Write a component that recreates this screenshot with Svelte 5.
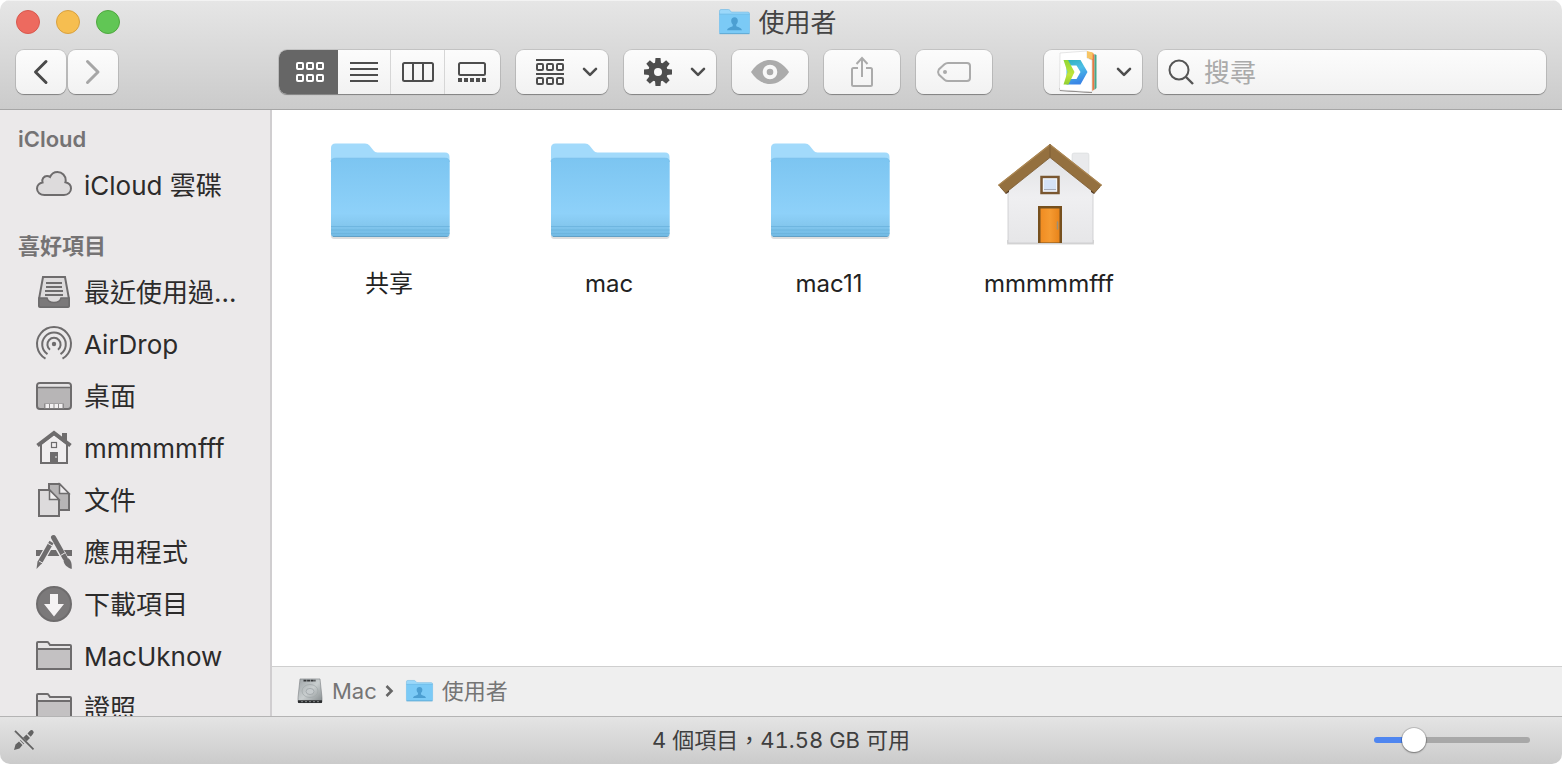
<script>
  let zoom = $state(21);
  let view = $state('icons');
  let query = $state('');

  const views = [
    { id: 'icons', label: '圖像' },
    { id: 'list', label: '列表' },
    { id: 'columns', label: '直欄' },
    { id: 'gallery', label: '圖庫' }
  ];

  const sections = [
    { title: 'iCloud', items: [{ icon: 'cloud', name: 'iCloud 雲碟' }] },
    {
      title: '喜好項目',
      items: [
        { icon: 'recents', name: '最近使用過…' },
        { icon: 'airdrop', name: 'AirDrop' },
        { icon: 'desktop', name: '桌面' },
        { icon: 'home', name: 'mmmmmfff' },
        { icon: 'documents', name: '文件' },
        { icon: 'apps', name: '應用程式' },
        { icon: 'downloads', name: '下載項目' },
        { icon: 'folder', name: 'MacUknow' },
        { icon: 'folder', name: '證照' }
      ]
    }
  ];

  const files = [
    { kind: 'folder', name: '共享' },
    { kind: 'folder', name: 'mac' },
    { kind: 'folder', name: 'mac11' },
    { kind: 'home', name: 'mmmmmfff' }
  ];
</script>

{#snippet squares(y)}
  {#each [1, 11, 21] as x}
    <rect {x} {y} width="6" height="6" rx="1" />
  {/each}
{/snippet}

{#snippet chevron()}
  <svg class="chev" width="16" height="10" viewBox="0 0 16 10"><path d="M2 1.8l6 6 6-6" fill="none" stroke="#4d4d4d" stroke-width="2.6" stroke-linecap="round" stroke-linejoin="round" /></svg>
{/snippet}

{#snippet usersFolder(w, h)}
  <svg width={w} height={h} viewBox="0 0 30 25" preserveAspectRatio="none">
    <path d="M0.5 2q0-1.5 1.500-1.500h7q1 0 1.600.8l1.400 1.700h16q1.500 0 1.500 1.500v18q0 1-1 1h-27q-1 0-1-1z" fill="#9bd8fa" stroke="#79bde5" stroke-width=".7" />
    <path d="M0.500 5.500h29v17q0 1.500-1 1.500h-27q-1 0-1-1.500z" fill="#7bcaf6" />
    <path d="M0.500 5h29" stroke="#62b5e5" stroke-width=".8" />
    <path d="M0.500 23.700h29" stroke="#60a9d4" stroke-width="1" />
    <path d="M15 8c-2 0-3.200 1.300-3.200 3.200 0 1.700.7 2.800 1.500 3.600v1.600c-.8 1.100-5 1.200-5.500 4.100h14.400c-.5-2.900-4.700-3-5.500-4.100v-1.600c.8-.8 1.500-1.900 1.500-3.600C18.200 9.300 17 8 15 8z" fill="#4c9fd2" />
  </svg>
{/snippet}

{#snippet sideIcon(kind)}
  <svg width="36" height="36" viewBox="0 0 36 36" fill="none" stroke="#6e6c6d" stroke-width="2">
    {#if kind === 'cloud'}
      <path d="M8.500 28C4.200 28 1 25.200 1 21.600c0-3.400 2.600-5.700 5.500-6.200C5.500 12 8 9 11 9c1.200 0 2.200.4 3 1C15.300 7 18 5 21.500 5c4.800 0 8.200 3.800 8.200 8.300 0 .7-.1 1.300-.3 1.900 3.400.7 5.600 3 5.600 6.300 0 3.700-3 6.500-7 6.500z" fill="#dddbdc" />
    {:else if kind === 'recents'}
      <path d="M7 3h22l4 22v6.500q0 1.500-1.500 1.500h-27Q3 33 3 31.500V25z" fill="#dddbdc" />
      <path d="M3 24h8q1 4.500 7 4.500t7-4.500h8v7.500q0 1.500-1.500 1.500h-27Q3 33 3 31.500z" fill="#7b797a" stroke-width="1.500" />
      <path d="M10 9h16M10 13h16M9 17h18M9 21h18" />
    {:else if kind === 'airdrop'}
      <circle cx="18" cy="18" r="2.200" fill="#6e6c6d" stroke="none" />
      <path d="M14 23.700A6.600 6.600 0 1 1 22 23.700M11.500 28.200A11.800 11.800 0 1 1 24.500 28.200M9.500 32.700A17 17 0 1 1 26.500 32.700" />
    {:else if kind === 'desktop'}
      <rect x="1" y="5" width="34" height="26" rx="3" fill="#b7b5b6" />
      <path d="M2 8q0-2 2-2h28q2 0 2 2v1H2z" fill="#e5e3e4" stroke="none" />
      <path d="M1 9.500h34" stroke-width="1.500" />
      <path d="M8 30.500v-5h20v5" fill="#8d8b8c" stroke="none" />
      <path d="M9.500 26h3.500v4H9.500zM14 26h3.500v4H14zM18.500 26H22v4h-3.500zM23 26h3.500v4H23z" fill="#f2f0f1" stroke="none" />
    {:else if kind === 'home'}
      <path d="M26 12V3h5v14" fill="#6e6c6d" stroke="none" />
      <path d="M5 14v19h26V14L18 4z" fill="#f0eeef" />
      <path d="M1.500 15.500L18 3l16.500 12.500" stroke-width="4" />
      <rect x="15.500" y="12.500" width="5" height="5" stroke-width="1.200" />
      <path d="M14 22h8v11h-8z" fill="#6e6c6d" stroke="none" /><path d="M20 26v2" stroke="#eee" stroke-width="1" />
    {:else if kind === 'documents'}
      <path d="M13 2h10.500L33 12v16H13z" fill="#b7b5b6" />
      <path d="M23.500 2v9.500H33z" fill="#eeecee" stroke-width="1.500" />
      <path d="M3 8h10.500L23 18v16H3z" fill="#dddbdc" />
      <path d="M13.500 8v9.500H23z" fill="#f2f0f1" stroke-width="1.500" />
    {:else if kind === 'apps'}
      <path d="M0 19h36" stroke-width="6" />
      <path d="M15.500 8L3 30M17 4l15 26" stroke="#ebe9ea" stroke-width="7" />
      <path d="M15.500 8L3.500 29" stroke-width="4.600" />
      <path d="M1.500 27.500l4 2.300L.5 35z" fill="#6e6c6d" stroke="none" />
      <path d="M17.500 3.500L29 24" stroke-width="5" stroke-linecap="round" />
      <path d="M27.500 26.500l4.500-2.500c3.500 2.400 3.900 6 3.700 11-4.200-1.500-7.800-4-8.200-8.500z" fill="#6e6c6d" stroke="none" />
      <path d="M12 9.500l4.500 2.500M3 27l4 2.300M24.500 21.500l5-3" stroke="#ebe9ea" stroke-width="1" />
    {:else if kind === 'downloads'}
      <circle cx="18" cy="18" r="17" fill="#7b797a" />
      <path d="M14 8h8v10h6L18 30.500 8 18h6z" fill="#f5f3f4" stroke="none" />
    {:else}
      <path d="M1 30V5q0-1 1-1h9q1 0 1.500.8l1.500 2.200H34q1 0 1 1v23H1z" fill="#e5e3e4" />
      <path d="M1 31V12q0-1 1-1h32q1 0 1 1v19z" fill="#c3c1c2" />
    {/if}
  </svg>
{/snippet}

<div class="window">
  <header>
    <div class="titlebar">
      <div class="lights">
        <button class="light red" aria-label="關閉"></button>
        <button class="light yellow" aria-label="縮到最小"></button>
        <button class="light green" aria-label="全螢幕"></button>
      </div>
      <h1>{@render usersFolder(31, 26)}<span>使用者</span></h1>
    </div>

    <div class="toolbar">
      <div class="nav">
        <button class="btn" aria-label="上一頁"><svg width="16" height="26" viewBox="0 0 16 26"><path d="M13 2.500L2.500 13 13 23.500" fill="none" stroke="#4a4a4a" stroke-width="3" stroke-linecap="round" stroke-linejoin="round" /></svg></button>
        <button class="btn" aria-label="下一頁"><svg width="16" height="26" viewBox="0 0 16 26"><path d="M2.500 2.500L13 13 2.500 23.500" fill="none" stroke="#a6a6a6" stroke-width="3" stroke-linecap="round" stroke-linejoin="round" /></svg></button>
      </div>

      <div class="views">
        {#each views as v}
          <button class:active={view === v.id} aria-label={v.label} aria-pressed={view === v.id} onclick={() => (view = v.id)}>
            {#if v.id === 'icons'}
              <svg width="28" height="20" viewBox="0 0 28 20" fill="none" stroke="currentColor" stroke-width="2">{@render squares(1)}{@render squares(13)}</svg>
            {:else if v.id === 'list'}
              <svg width="28" height="20" viewBox="0 0 28 20" stroke="currentColor" stroke-width="2"><path d="M0 1h28M0 7h28M0 13h28M0 19h28" /></svg>
            {:else if v.id === 'columns'}
              <svg width="32" height="20" viewBox="0 0 32 20" fill="none" stroke="currentColor" stroke-width="2"><rect x="1" y="1" width="30" height="18" rx="1.500" /><path d="M11 1v18M21 1v18" /></svg>
            {:else}
              <svg width="28" height="20" viewBox="0 0 28 20" fill="none" stroke="currentColor" stroke-width="2"><rect x="1" y="1" width="26" height="12" rx="1.500" /><path d="M0 18h28" stroke-width="4" stroke-dasharray="4 2" /></svg>
            {/if}
          </button>
        {/each}
      </div>

      <button class="btn menu" aria-label="排列項目" aria-haspopup="menu">
        <svg width="28" height="26" viewBox="0 0 28 26" fill="none" stroke="#4d4d4d" stroke-width="2"><path d="M0 1h28M0 15h28" />{@render squares(5)}{@render squares(19)}</svg>
        {@render chevron()}
      </button>
      <button class="btn menu" aria-label="動作" aria-haspopup="menu">
        <svg width="28" height="28" viewBox="-14 -14 28 28">
          {#each [0, 45, 90, 135] as a}<path d="M-2.500-14h5l.5 5v18l-.5 5h-5l-.5-5V-9z" transform="rotate({a})" fill="#4d4d4d" />{/each}
          <circle r="9.800" fill="#4d4d4d" /><circle r="4" fill="#f8f8f8" />
        </svg>
        {@render chevron()}
      </button>
      <button class="btn wide" aria-label="快速查看">
        <svg width="38" height="24" viewBox="0 0 38 24"><path d="M0 12C5 4.500 11.500 0 19 0s14 4.500 19 12c-5 7.500-11.500 12-19 12S5 19.500 0 12z" fill="#ababab" /><circle cx="19" cy="12" r="5.300" fill="none" stroke="#f8f8f8" stroke-width="4" /></svg>
      </button>
      <button class="btn wide" aria-label="分享">
        <svg width="22" height="32" viewBox="0 0 22 32" fill="none" stroke="#ababab" stroke-width="2"><path d="M7 12H2.500Q1 12 1 13.500v15Q1 30 2.500 30h17q1.500 0 1.500-1.500v-15Q21 12 19.500 12H15M11 21V2M5.500 8L11 2l5.500 6" /></svg>
      </button>
      <button class="btn wide" aria-label="標籤">
        <svg width="34" height="20" viewBox="0 0 34 20" fill="none" stroke="#ababab" stroke-width="2"><path d="M11 1h19q3 0 3 3v12q0 3-3 3H11q-2 0-3.500-1.300L1.800 12.500q-1.500-2.500 0-5L7.500 2.300Q9 1 11 1z" /><circle cx="8" cy="10" r="2" fill="#ababab" stroke="none" /></svg>
      </button>

      <button class="btn menu app" aria-label="同步" aria-haspopup="menu">
        <svg width="40" height="42" viewBox="0 0 40 42">
          <defs>
            <linearGradient id="g-blue" x1="0" y1="0" x2="0.300" y2="1"><stop offset="0" stop-color="#2cb0bd" /><stop offset=".45" stop-color="#4cbfe6" /><stop offset="1" stop-color="#3a86e6" /></linearGradient>
            <linearGradient id="g-lime" x1="0" y1="0" x2="0" y2="1"><stop offset="0" stop-color="#8fd636" /><stop offset=".6" stop-color="#c0e53a" /><stop offset="1" stop-color="#90cf30" /></linearGradient>
          </defs>
          <path d="M1 37l33 1.500V42L2 40z" fill="#4c4644" opacity=".8" />
          <path d="M31 1l4.500 1v37L31 41z" fill="#f2a43c" />
          <path d="M34.500 3l2 .8V38l-2 2z" fill="#e9744a" />
          <path d="M36.500 3l2 1v33l-2 2z" fill="#45a78c" />
          <path d="M2 2l27-2v7l5 2v32L1.500 39z" fill="#fff" stroke="#d5d5d5" stroke-width=".6" />
          <path d="M29 0l5.500 1.500V8L29 7z" fill="#f7c565" />
          <path fill-rule="evenodd" d="M8.500 9h14l7 12-7 12.500h-14zM12 14.500l4 6.500-4 7h6.500l4-7-4-6.500z" fill="url(#g-blue)" />
          <path d="M5.500 9h4.500l6.500 12-6 12.500h-5L9.500 21z" fill="url(#g-lime)" />
        </svg>
        {@render chevron()}
      </button>

      <label class="search">
        <svg width="26" height="26" viewBox="0 0 26 26" fill="none" stroke="#555" stroke-width="2"><circle cx="11" cy="11" r="9.500" /><path d="M18 18l7 7" stroke-width="2.400" /></svg>
        <input type="text" placeholder="搜尋" aria-label="搜尋" bind:value={query} />
      </label>
    </div>
  </header>

  <div class="body">
    <nav class="sidebar">
      {#each sections as s}
        <section>
          <h2>{s.title}</h2>
          <ul>
            {#each s.items as item}
              <li><a href="#top">{@render sideIcon(item.icon)}<span>{item.name}</span></a></li>
            {/each}
          </ul>
        </section>
      {/each}
    </nav>

    <main>
      <div class="files">
        {#each files as f}
          <button class="file">
            <svg width="120" height="110" viewBox="0 0 120 110">
              {#if f.kind === 'folder'}
                <defs><linearGradient id="front" x1="0" y1="0" x2="0" y2="1"><stop offset="0" stop-color="#7cc5f1" /><stop offset=".7" stop-color="#8ed1f9" /><stop offset=".84" stop-color="#85c8ef" /><stop offset="1" stop-color="#70b9e3" /></linearGradient></defs>
                <rect x="1" y="90" width="118.500" height="9" rx="3" fill="#000" opacity=".13" />
                <path d="M1 8q0-4.500 4.500-4.500H35q3 0 4.500 2l4 5q1.300 2 4 2H115q4.500 0 4.500 4.500V93H1z" fill="#a2dafb" />
                <path d="M1 22q0-3.800 4.500-3.800H115q4.500 0 4.500 3.800v71.500q0 3.500-3.500 3.500H4.500Q1 97 1 93.500z" fill="url(#front)" />
                <path d="M1 22q0-3.800 4.500-3.800H115q4.500 0 4.500 3.800" fill="none" stroke="#75bce8" stroke-width=".7" />
                <path d="M1 86.500h118.500M1 90h118.500M1 93.500h118.500" stroke="#6bb2dc" stroke-width=".8" />
                <path d="M3 96.500h114.500" stroke="#62a0c6" stroke-width="1.200" />
              {:else}
                <defs>
                  <linearGradient id="wall" x1="0" y1="0" x2="0" y2="1"><stop offset="0" stop-color="#dfe0e3" /><stop offset=".5" stop-color="#efeff1" /><stop offset="1" stop-color="#e6e6e8" /></linearGradient>
                  <linearGradient id="door"><stop offset="0" stop-color="#f08c22" /><stop offset=".5" stop-color="#f59a31" /><stop offset="1" stop-color="#e8841b" /></linearGradient>
                </defs>
                <path d="M17 100h87v4.500H17z" fill="#000" opacity=".15" />
                <rect x="82" y="13" width="17" height="28" rx="2" fill="#e9eaec" stroke="#d3d4d6" stroke-width=".5" />
                <path d="M60 12L18 47v56h85V47z" fill="url(#wall)" stroke="#c9c9cc" stroke-width=".8" />
                <path d="M10 47l6 7 3-2v-6zM110 47l-6 7-3-2v-6z" fill="#4b3521" />
                <path d="M60 4L8 45l7.500 8L60 17.500 104.500 53l7.500-8z" fill="#94703f" />
                <path d="M60 4L8 45l.7.8L60 5.500l51.300 40.300.7-.8z" fill="#ad8854" />
                <path d="M15.500 53L60 17.500 104.500 53" fill="none" stroke="#7a5930" stroke-width=".8" />
                <path d="M60 4v13.500" stroke="#7a5a32" stroke-width=".8" />
                <rect x="51.500" y="37" width="17" height="16" fill="#d5e2f6" stroke="#7a5730" stroke-width="2.500" />
                <path d="M53 49.500h14" stroke="#a8adba" />
                <rect x="53.500" y="39" width="13" height="12" fill="none" stroke="#f5f5f5" />
                <path d="M48 103V66h24v37z" fill="#76501e" />
                <rect x="50.500" y="68.500" width="19" height="34" fill="url(#door)" />
                <path d="M67.500 82v7" stroke="#9c9077" stroke-width="1.500" stroke-linecap="round" />
              {/if}
            </svg>
            <span>{f.name}</span>
          </button>
        {/each}
      </div>

      <div class="path">
        <svg width="26" height="26" viewBox="0 0 26 28" preserveAspectRatio="none">
          <defs><linearGradient id="metal" x1="0" y1="0" x2="1" y2="1"><stop offset="0" stop-color="#9da3a6" /><stop offset=".5" stop-color="#c9cecf" /><stop offset="1" stop-color="#83898b" /></linearGradient></defs>
          <path d="M3 1h20l2 20v4.500q0 1-1 1H2q-1 0-1-1V21z" fill="url(#metal)" stroke="#777c7e" stroke-width=".6" />
          <path d="M6.500 2.800h12" stroke="#343638" stroke-width="2" stroke-dasharray="3 .6" />
          <ellipse cx="13" cy="14" rx="8" ry="7" fill="none" stroke="#a3a9ab" stroke-width=".8" /><ellipse cx="13" cy="14.500" rx="4" ry="3.300" fill="#c6cbcd" stroke="#969c9f" stroke-width=".7" />
          <path d="M1 24h24v2q0 1-1 1H2q-1 0-1-1z" fill="#2c2e2f" /><path d="M4 25.500h18" stroke="#858b8d" stroke-dasharray="2 2" />
        </svg>
        <span class="crumb">Mac</span>
        <svg class="sep" width="8" height="12" viewBox="0 0 8 12"><path d="M1.500 1L6.500 6l-5 5" fill="none" stroke="#666" stroke-width="2.600" /></svg>
        {@render usersFolder(27, 22)}
        <span class="crumb">使用者</span>
      </div>
    </main>
  </div>

  <footer>
    <button class="plain" aria-label="唯讀">
      <svg width="20" height="20" viewBox="0 0 20 20" fill="#636363"><path d="M0 20l1.500-5.500L5 11.500 8.500 15l-3 3.500zM6 10.500l6.500-6 3.500 3.500-6.300 6.300zM13.500 3.500L15.700 1q2-1.800 3.500 0 1.300 1.500-.4 3.300L16.700 6.700z" /><path d="M.5 1.500l18 18" stroke="#d6d6d6" stroke-width="3.600" /><path d="M1 .800l18.500 18.500" stroke="#636363" stroke-width="1.800" /></svg>
    </button>
    <p>4 個項目，41.58 GB 可用</p>
    <input class="zoom" type="range" min="0" max="100" aria-label="圖像大小" bind:value={zoom} style="--v: {zoom}" />
  </footer>
</div>

<style>
  :global(body) { background: #fff; }
  * { box-sizing: border-box; }
  button { font: inherit; color: inherit; border: 0; padding: 0; margin: 0; background: none; }
  svg { display: block; flex: none; overflow: visible; }
  h1, h2, p, ul { margin: 0; padding: 0; font-weight: 400; list-style: none; }

  .window {
    display: flex;
    flex-direction: column;
    height: 100vh;
    border-radius: 10px;
    overflow: hidden;
    font-family: Inter, "Noto Sans CJK TC", sans-serif;
    line-height: 30px;
    background: #fff;
  }

  header {
    flex: none;
    padding-bottom: 15px;
    background: linear-gradient(#e6e6e6, #cbcbcb);
    border-bottom: 1px solid #a6a6a6;
    box-shadow: inset 0 1px #f3f3f3;
  }
  .titlebar { display: grid; grid-template-columns: 1fr auto 1fr; align-items: center; height: 44px; padding: 0 22px 0 16px; }
  .lights { display: flex; gap: 16px; }
  .light { width: 24px; height: 24px; border-radius: 50%; border: 1px solid; }
  .red { background: #ed6a5f; border-color: #d8584e; }
  .yellow { background: #f6be50; border-color: #d8a03f; }
  .green { background: #61c655; border-color: #4fa73f; }
  h1 { display: flex; align-items: center; gap: 8px; font-size: 26px; color: #444; }
  h1 span, .sidebar a span, .search input { padding: 2px 0 0; }

  .toolbar { display: flex; gap: 16px; height: 44px; margin-top: 6px; padding: 0 16px; }
  .nav { display: flex; gap: 2px; margin-right: 145px; }
  .btn, .views, .search {
    display: flex;
    align-items: center;
    justify-content: center;
    border-radius: 8px;
    background: linear-gradient(#fcfcfc, #f2f2f2);
    box-shadow: 0 0 0 1px rgba(0, 0, 0, 0.1), 0 1px 1px rgba(0, 0, 0, 0.3);
  }
  .nav .btn { width: 50px; }
  .views { align-items: stretch; overflow: hidden; color: #4d4d4d; }
  .views button { display: flex; align-items: center; justify-content: center; width: 54px; border-left: 1px solid #d6d6d6; }
  .views button:first-child { width: 59px; padding-left: 2px; border: 0; }
  .views button:nth-child(2) { width: 52px; border: 0; }
  .views button:last-child { width: 56px; padding-right: 2px; }
  .views .active { background: #666; color: #fff; }
  .menu { width: 92px; justify-content: space-between; padding: 0 10px 0 20px; }
  .wide { width: 76px; }
  .app { width: 98px; margin-left: 36px; padding: 0 10px 0 14px; }
  .search { flex: 1; min-width: 0; justify-content: flex-start; gap: 10px; padding-left: 10px; }
  .search input { flex: 1; min-width: 0; border: 0; outline: 0; background: none; font: inherit; font-size: 26px; color: #444; }
  .search input::placeholder { color: #aaa; opacity: 1; }

  .body { flex: 1; min-height: 0; display: flex; }
  .sidebar { flex: none; width: 272px; padding-top: 14px; overflow: hidden; background: #ebe9ea; border-right: 2px solid #d0ced0; }
  section { margin-bottom: 20px; }
  h2 { margin-bottom: 5px; padding-left: 18px; font-size: 22px; font-weight: 600; color: #757374; }
  .sidebar a { display: flex; align-items: center; gap: 12px; height: 52px; padding-left: 36px; font-size: 26px; white-space: nowrap; color: #2c2b2b; text-decoration: none; }

  main { flex: 1; min-width: 0; display: flex; flex-direction: column; }
  .files { flex: 1; min-height: 0; display: flex; flex-wrap: wrap; align-content: flex-start; padding: 30px 8px; }
  .file { display: flex; flex-direction: column; align-items: center; gap: 19px; width: 220px; font-size: 24px; color: #222; }
  .file span { padding-right: 2px; }
  .path { flex: none; display: flex; align-items: center; height: 50px; padding: 0 25px 2px; background: #efefef; border-top: 1px solid #cfcfcf; font-size: 22px; color: #757575; }
  .crumb { margin-left: 9px; }
  .sep { margin: 0 13px 0 8px; }

  footer {
    flex: none;
    display: grid;
    grid-template-columns: 1fr auto 1fr;
    align-items: center;
    height: 48px;
    padding: 0 14px 2px;
    background: linear-gradient(#e4e4e4, #cbcbcb);
    border-top: 1px solid #b4b4b4;
    font-size: 22px;
    font-variant-numeric: tabular-nums;
    color: #3f3f3f;
  }
  .plain { justify-self: start; }
  .zoom {
    justify-self: end;
    appearance: none;
    width: 156px;
    height: 24px;
    margin: 0 18px 0 0;
    background: none;
  }
  .zoom::-webkit-slider-runnable-track {
    height: 6px;
    border-radius: 3px;
    background: linear-gradient(90deg, #4f86f0 calc(var(--v) * 1% + 4px), #a8a8a8 0);
  }
  .zoom::-webkit-slider-thumb {
    appearance: none;
    width: 24px;
    height: 24px;
    margin-top: -9px;
    border-radius: 50%;
    background: #fff;
    box-shadow: 0 0 0 1px rgba(0, 0, 0, 0.15), 0 1px 2px rgba(0, 0, 0, 0.35);
  }
</style>
